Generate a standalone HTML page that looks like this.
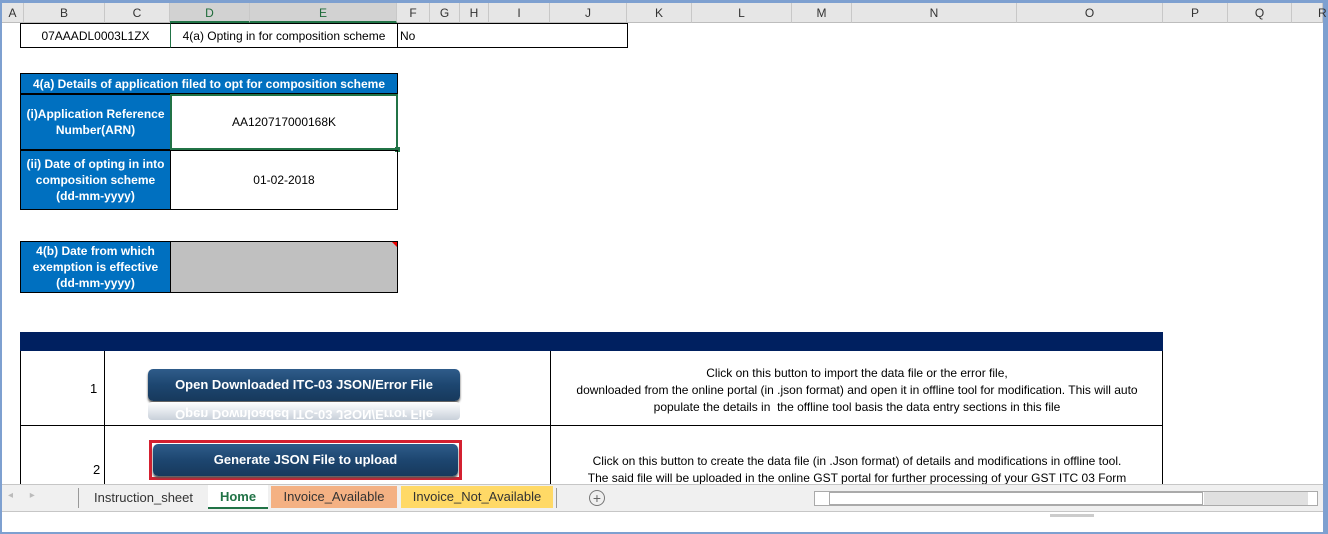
<!DOCTYPE html><html><head><style>
*{margin:0;padding:0;box-sizing:border-box}
body{width:1328px;height:534px;position:relative;overflow:hidden;background:#fff;font-family:"Liberation Sans",Arial,sans-serif;font-size:12px;color:#000}
.a{position:absolute}
.hd{position:absolute;top:3px;height:20px;background:#e6e6e6;border-right:1px solid #c8c8c8;border-bottom:1px solid #bdbdbd;text-align:center;line-height:20px;font-size:12px;color:#333}
.blue{background:#0070c0;color:#fff;font-weight:bold;text-align:center;display:flex;align-items:center;justify-content:center;font-size:12px;line-height:16px}
.cell{display:flex;align-items:center;justify-content:center;border:1px solid #000}
.btn{position:absolute;background:linear-gradient(#2f5c8a,#1d4670 50%,#17395c);color:#fff;font-weight:bold;font-size:13px;text-align:center;border-radius:5px;box-shadow:0 2px 2px #555}
</style></head><body>
<div class="a" style="left:0;top:0;width:1328px;height:3px;background:#7ea0d0"></div>
<div class="a" style="left:0;top:0;width:2px;height:534px;background:#7ea0d0"></div>
<div class="a" style="right:0;top:0;width:5px;height:534px;background:#7ea0d0"></div>
<div class="a" style="left:0;bottom:0;width:1328px;height:2px;background:#7ea0d0"></div>
<div class="hd" style="left:2px;width:22px">A</div>
<div class="hd" style="left:24px;width:81px">B</div>
<div class="hd" style="left:105px;width:65px">C</div>
<div class="hd" style="left:170px;width:80px;background:#d2d2d2;color:#1e6b3a;border-bottom:2px solid #217346">D</div>
<div class="hd" style="left:250px;width:147px;background:#d2d2d2;color:#1e6b3a;border-bottom:2px solid #217346">E</div>
<div class="hd" style="left:397px;width:33px">F</div>
<div class="hd" style="left:430px;width:30px">G</div>
<div class="hd" style="left:460px;width:29px">H</div>
<div class="hd" style="left:489px;width:61px">I</div>
<div class="hd" style="left:550px;width:77px">J</div>
<div class="hd" style="left:627px;width:65px">K</div>
<div class="hd" style="left:692px;width:100px">L</div>
<div class="hd" style="left:792px;width:60px">M</div>
<div class="hd" style="left:852px;width:165px">N</div>
<div class="hd" style="left:1017px;width:146px">O</div>
<div class="hd" style="left:1163px;width:65px">P</div>
<div class="hd" style="left:1228px;width:64px">Q</div>
<div class="hd" style="left:1292px;width:31px;text-align:left;padding-left:26px">R</div>

<div class="a cell" style="left:20px;top:23px;width:151px;height:25px">07AAADL0003L1ZX</div>
<div class="a cell" style="left:170px;top:23px;width:228px;height:25px;border-left:1px solid #217346">4(a) Opting in for composition scheme</div>
<div class="a cell" style="left:397px;top:23px;width:231px;height:25px;justify-content:flex-start;padding-left:2px">No</div>

<div class="a blue" style="left:20px;top:73px;width:378px;height:21px;border:1px solid #000">4(a) Details of application filed to opt for composition scheme</div>
<div class="a blue" style="left:20px;top:94px;width:151px;height:56px;border:1px solid #000">(i)Application Reference<br>Number(ARN)</div>
<div class="a cell" style="left:170px;top:94px;width:228px;height:56px;border:2px solid #217346">AA120717000168K</div>
<div class="a" style="left:395px;top:147px;width:5px;height:5px;background:#217346"></div>
<div class="a blue" style="left:20px;top:150px;width:151px;height:60px;border:1px solid #000">(ii) Date of opting in into<br>composition scheme<br>(dd-mm-yyyy)</div>
<div class="a cell" style="left:170px;top:150px;width:228px;height:60px">01-02-2018</div>

<div class="a blue" style="left:20px;top:241px;width:151px;height:52px;border:1px solid #000">4(b) Date from which<br>exemption is effective<br>(dd-mm-yyyy)</div>
<div class="a" style="left:170px;top:241px;width:228px;height:52px;background:#c0c0c0;border:1px solid #000"></div>
<div class="a" style="left:392px;top:242px;width:0;height:0;border-left:5px solid transparent;border-top:5px solid #e00"></div>

<div class="a" style="left:20px;top:332px;width:1143px;height:19px;background:#002060"></div>
<div class="a" style="left:20px;top:351px;width:1143px;height:150px;border-left:1px solid #000;border-right:1px solid #000"></div>
<div class="a" style="left:20px;top:425px;width:1143px;height:1px;background:#000"></div>
<div class="a" style="left:104px;top:351px;width:1px;height:150px;background:#000"></div>
<div class="a" style="left:550px;top:351px;width:1px;height:150px;background:#000"></div>
<div class="a" style="left:90px;top:381px;font-size:13px">1</div>
<div class="a" style="left:93px;top:462px;font-size:13px">2</div>
<div class="btn" style="left:148px;top:369px;width:312px;height:32px;line-height:32px">Open Downloaded ITC-03 JSON/Error File</div>
<div class="a" style="left:148px;top:402px;width:312px;height:18px;background:linear-gradient(#c8d0da,#fff);border-radius:4px;color:#fff;font-weight:bold;font-size:13px;text-align:center;line-height:12px;overflow:hidden;transform:scaleY(-1)">Open Downloaded ITC-03 JSON/Error File</div>
<div class="a" style="left:149px;top:440px;width:313px;height:40px;border:3px solid #d42030"></div>
<div class="btn" style="left:153px;top:444px;width:305px;height:32px;line-height:32px">Generate JSON File to upload</div>
<div class="a" style="left:551px;top:365px;width:612px;text-align:center;line-height:17px">Click on this button to import the data file or the error file,<br>downloaded from the online portal (in .json format) and open it in offline tool for modification. This will auto<br>populate the details in &nbsp;the offline tool basis the data entry sections in this file</div>
<div class="a" style="left:551px;top:453px;width:612px;text-align:center;line-height:17px">Click on this button to create the data file (in .Json format) of details and modifications in offline tool.<br>The said file will be uploaded in the online GST portal for further processing of your GST ITC 03 Form</div>

<div class="a" style="left:2px;top:484px;width:1321px;height:28px;background:#f0f0f0;border-top:1px solid #c6c6c6;border-bottom:1px solid #c6c6c6"></div>
<div class="a" style="left:8px;top:490px;color:#bbb;font-size:10px">◂ &nbsp;&nbsp;&nbsp;&nbsp; ▸</div>
<div class="a" style="left:78px;top:488px;width:1px;height:20px;background:#999"></div>
<div class="a" style="left:94px;top:490px;color:#333;font-size:13px">Instruction_sheet</div>
<div class="a" style="left:208px;top:485px;width:60px;height:24px;background:#fff;border-bottom:2px solid #217346;color:#217346;font-weight:bold;font-size:13px;text-align:center;line-height:24px">Home</div>
<div class="a" style="left:271px;top:486px;width:126px;height:22px;background:#f4b183;font-size:13px;text-align:center;line-height:22px;color:#333">Invoice_Available</div>
<div class="a" style="left:401px;top:486px;width:152px;height:22px;background:#ffd966;font-size:13px;text-align:center;line-height:22px;color:#333">Invoice_Not_Available</div>
<div class="a" style="left:556px;top:488px;width:1px;height:20px;background:#999"></div>
<div class="a" style="left:589px;top:490px;width:16px;height:16px;border:1px solid #777;border-radius:50%;text-align:center;line-height:14px;color:#666;font-size:14px">+</div>
<div class="a" style="left:814px;top:491px;width:504px;height:15px;background:#fff;border:1px solid #aaa"></div>
<div class="a" style="left:829px;top:492px;width:374px;height:13px;border:1px solid #aaa;background:#fff"></div>
<div class="a" style="left:1204px;top:492px;width:104px;height:13px;background:#e0e0e0"></div>
<div class="a" style="left:1050px;top:514px;width:44px;height:3px;background:#ccc"></div>
</body></html>
